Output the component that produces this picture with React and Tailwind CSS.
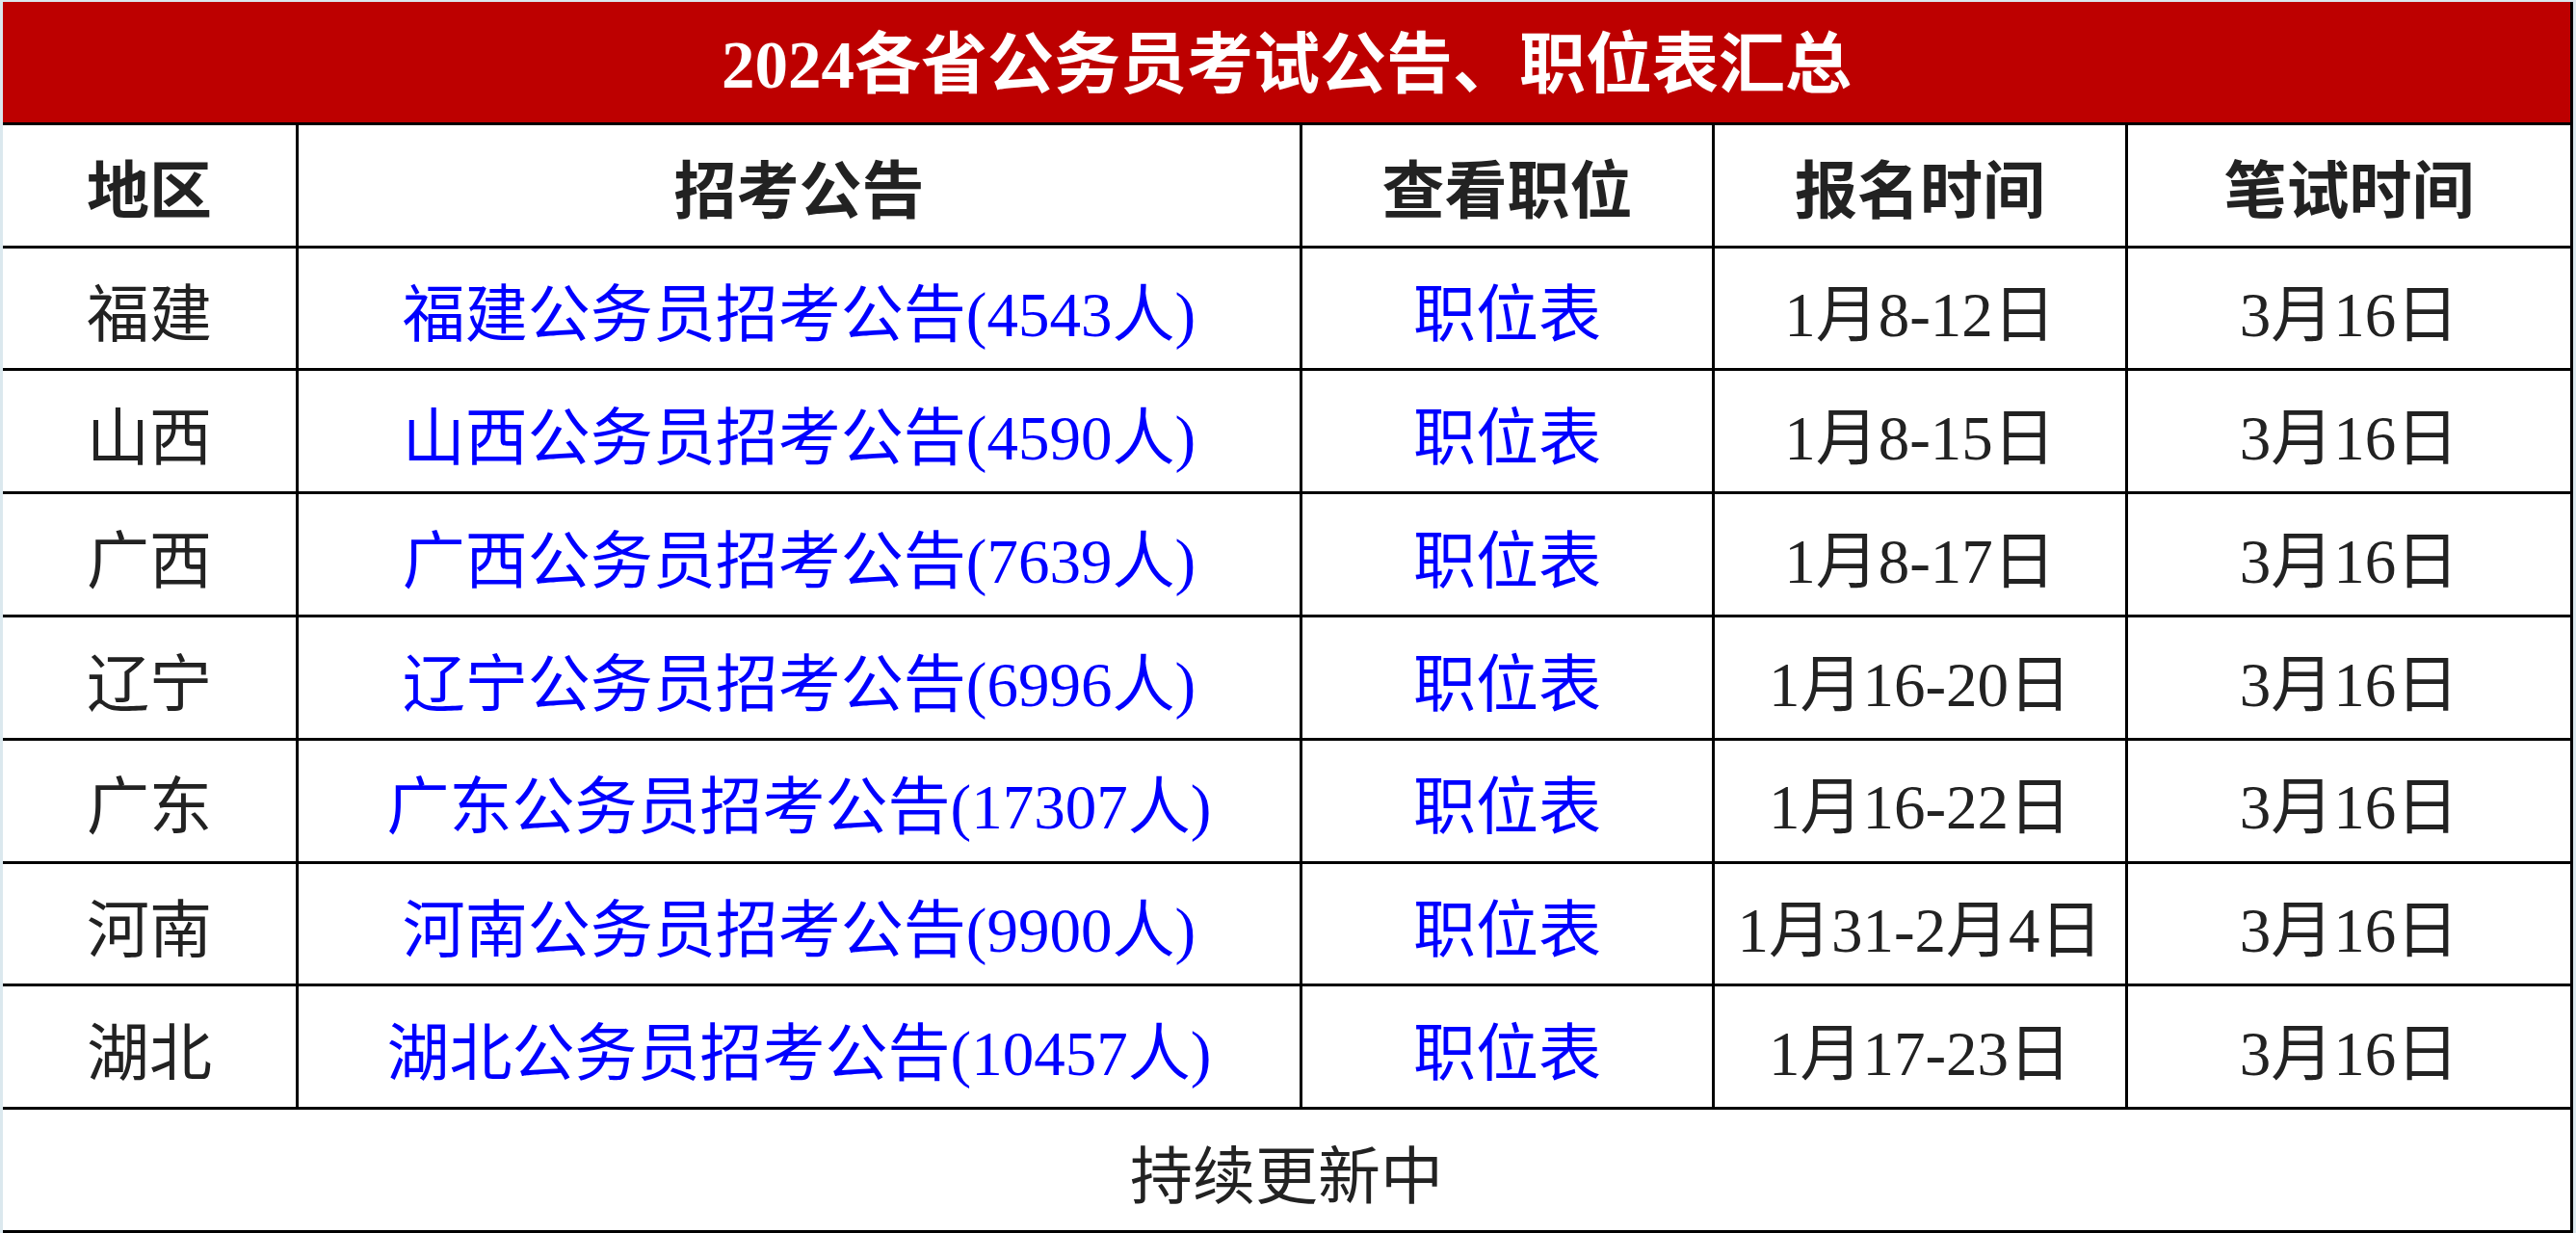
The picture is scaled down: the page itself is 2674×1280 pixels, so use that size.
const rows = [
  { area: "福建", notice: "福建公务员招考公告(4543人)", signup: "1月8-12日", exam: "3月16日" },
  { area: "山西", notice: "山西公务员招考公告(4590人)", signup: "1月8-15日", exam: "3月16日" },
  { area: "广西", notice: "广西公务员招考公告(7639人)", signup: "1月8-17日", exam: "3月16日" },
  { area: "辽宁", notice: "辽宁公务员招考公告(6996人)", signup: "1月16-20日", exam: "3月16日" },
  { area: "广东", notice: "广东公务员招考公告(17307人)", signup: "1月16-22日", exam: "3月16日" },
  { area: "河南", notice: "河南公务员招考公告(9900人)", signup: "1月31-2月4日", exam: "3月16日" },
  { area: "湖北", notice: "湖北公务员招考公告(10457人)", signup: "1月17-23日", exam: "3月16日" },
];

const cell = "bg-white flex items-center justify-center pt-[16px] whitespace-nowrap";

const App = () => {
  return (
    <div className="w-[2674px] h-[1280px] bg-[#dbe8ee] pt-[2px] pl-[3px] pr-[3px] overflow-hidden font-['Liberation_Serif','Noto_Sans_CJK_SC',serif]">
      <div className="h-[1278px] grid grid-cols-[304px_1039px_425px_426px_459px] grid-rows-[repeat(10,minmax(0,1fr))] gap-[3px] bg-black pr-[3px] pb-[3px]">
        {/* title */}
        <div className="col-span-5 bg-[#bd0000] flex items-center justify-center pt-[8px] text-white text-[69px] font-bold">
          2024各省公务员考试公告、职位表汇总
        </div>

        {/* header row */}
        {["地区", "招考公告", "查看职位", "报名时间", "笔试时间"].map((h) => (
          <div key={h} className={`${cell} text-[65px] font-bold text-[#222]`}>
            {h}
          </div>
        ))}

        {/* data rows */}
        {rows.map((r) => (
          <div key={r.area} className="contents">
            <div className={`${cell} text-[65px] text-[#222]`}>{r.area}</div>
            <div className={`${cell} text-[65px] text-[#0000ff]`}>{r.notice}</div>
            <div className={`${cell} text-[65px] text-[#0000ff]`}>职位表</div>
            <div className={`${cell} text-[65px] text-[#222]`}>{r.signup}</div>
            <div className={`${cell} text-[65px] text-[#222]`}>{r.exam}</div>
          </div>
        ))}

        {/* footer */}
        <div className={`col-span-5 ${cell} text-[65px] text-[#222]`}>持续更新中</div>
      </div>
    </div>
  );
};

export default App;
